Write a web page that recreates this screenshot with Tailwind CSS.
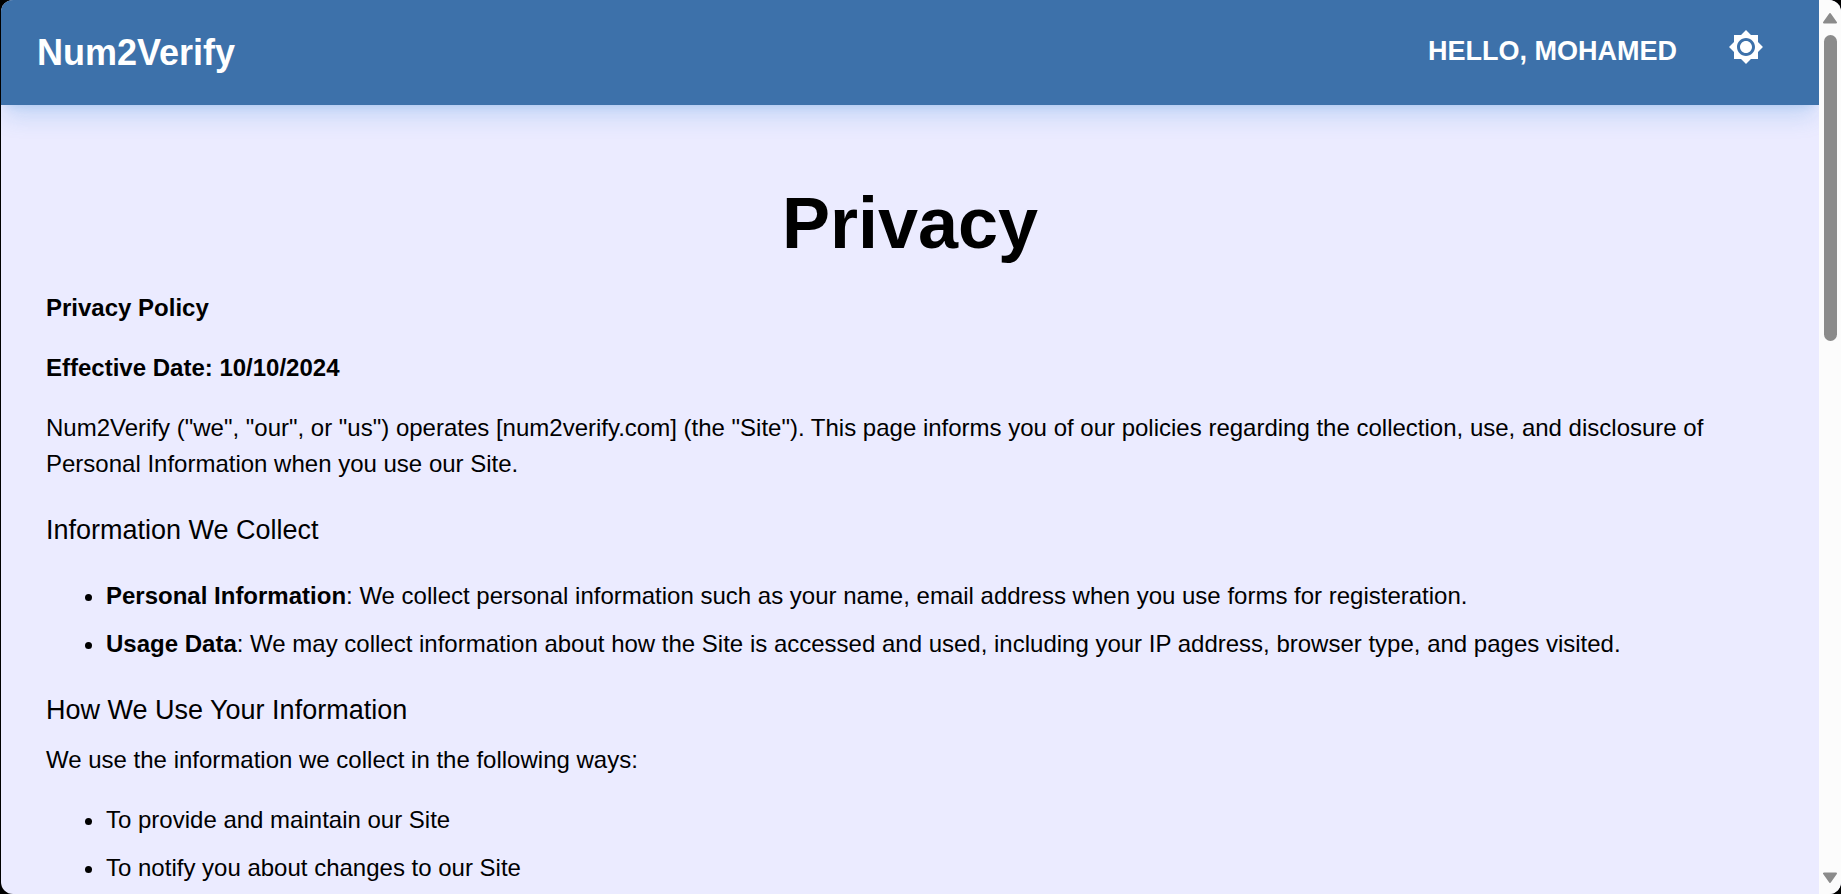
<!DOCTYPE html>
<html lang="en">
<head>
<meta charset="utf-8">
<meta name="viewport" content="width=device-width, initial-scale=1">
<title>Num2Verify - Privacy</title>
<script src="https://cdn.jsdelivr.net/npm/@tailwindcss/browser@4"></script>
</head>
<body class="h-screen overflow-hidden bg-black pl-px font-['Liberation_Sans',Arial,sans-serif] text-black">
<div class="flex h-full overflow-hidden rounded-xl bg-[#ebebff]">
  <div class="h-full min-w-0 flex-1 overflow-hidden">
    <header class="flex h-[105px] items-center justify-between bg-[#3d71aa] pr-[55px] pl-9 text-white shadow-[0_15px_22px_-4px_rgb(40_130_210/0.2),0_6px_9px_-6px_rgb(40_130_210/0.2)]">
      <a href="#" class="text-4xl font-bold">Num2Verify</a>
      <div class="mb-[3px] flex items-center gap-[51px]">
        <span class="text-[27px] leading-10 font-bold">HELLO, MOHAMED</span>
        <button type="button" aria-label="Toggle theme" class="mb-2">
          <svg class="size-9" viewBox="0 0 24 24" fill="currentColor" aria-hidden="true"><path d="M20 8.69V4h-4.69L12 .69 8.69 4H4v4.69L.69 12 4 15.31V20h4.69L12 23.31 15.31 20H20v-4.69L23.31 12 20 8.69zM12 18c-3.31 0-6-2.69-6-6s2.69-6 6-6 6 2.69 6 6-2.69 6-6 6zm0-10c-2.21 0-4 1.79-4 4s1.79 4 4 4 4-1.79 4-4-1.79-4-4-4z"/></svg>
        </button>
      </div>
    </header>
    <main class="px-[45px] pt-[76px] text-2xl leading-9">
      <h1 class="mb-[25px] text-center text-7xl leading-[84px] font-bold">Privacy</h1>
      <p class="font-bold">Privacy Policy</p>
      <p class="mt-6 font-bold">Effective Date: 10/10/2024</p>
      <p class="mt-6">Num2Verify ("we", "our", or "us") operates [num2verify.com] (the "Site"). This page informs you of our policies regarding the collection, use, and disclosure of Personal Information when you use our Site.</p>
      <h2 class="mt-7 text-[27px] leading-10">Information We Collect</h2>
      <ul class="mt-7 flex list-disc flex-col gap-3 pl-[60px]">
        <li><strong>Personal Information</strong>: We collect personal information such as your name, email address when you use forms for registeration.</li>
        <li><strong>Usage Data</strong>: We may collect information about how the Site is accessed and used, including your IP address, browser type, and pages visited.</li>
      </ul>
      <h2 class="mt-7 text-[27px] leading-10">How We Use Your Information</h2>
      <p class="mt-3">We use the information we collect in the following ways:</p>
      <ul class="mt-6 flex list-disc flex-col gap-3 pl-[60px]">
        <li>To provide and maintain our Site</li>
        <li>To notify you about changes to our Site</li>
      </ul>
    </main>
  </div>
  <div class="flex w-[22px] shrink-0 flex-col items-center bg-[#fcfcfc] pt-3 pb-[10px] text-[#8b8b8b]" aria-hidden="true">
    <svg class="h-3 w-[14px]" viewBox="0 0 14 12" fill="currentColor" stroke="currentColor" stroke-width="2" stroke-linejoin="round"><path d="M7 2 13 10.500H1z"/></svg>
    <div class="mt-[11px] flex w-[13px] flex-1 flex-col"><div class="h-[36.5%] rounded-full bg-[#8b8b8b]"></div></div>
    <svg class="h-3 w-[14px]" viewBox="0 0 14 12" fill="currentColor" stroke="currentColor" stroke-width="2" stroke-linejoin="round"><path d="M7 10 1 1.500H13z"/></svg>
  </div>
</div>
</body>
</html>
